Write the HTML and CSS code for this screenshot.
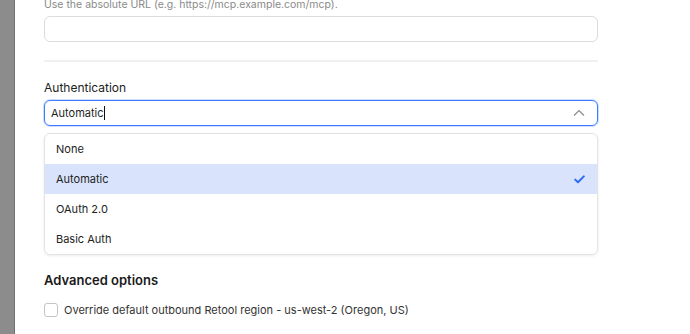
FILE: index.html
```html
<!DOCTYPE html>
<html lang="en">
<head>
  <meta charset="UTF-8" />
  <title>MCP server</title>
  <link rel="stylesheet" href="styles.css">
</head>
<body>
  <div class="backdrop"></div>
  <div class="panel">
    <div class="field">
      <p class="hint">Use the absolute URL (e.g. https://mcp.example.com/mcp).</p>
      <input type="text" class="text-input" />
    </div>

    <hr class="divider" />

    <div class="field auth">
      <label class="label">Authentication</label>
      <div class="select open">
        <span class="select-value">Automatic<span class="caret"></span></span>
        <svg class="chevron" width="12" height="8" viewBox="0 0 12 8">
          <path d="M1 6.5 L6 1.5 L11 6.5" fill="none" stroke="#8a8a8a" stroke-width="1.2" />
        </svg>
      </div>
      <ul class="menu">
        <li>None</li>
        <li class="selected">Automatic
          <svg class="check" width="11" height="9" viewBox="0 0 11 9">
            <path d="M1.2 4.6 L4 7.3 L9.8 1.4" fill="none" stroke="#2d6bf5" stroke-width="2" stroke-linecap="round" stroke-linejoin="round" />
          </svg>
        </li>
        <li>OAuth 2.0</li>
        <li>Basic Auth</li>
      </ul>
    </div>

    <h3 class="section">Advanced options</h3>
    <label class="checkrow">
      <span class="box"></span>
      Override default outbound Retool region - us-west-2 (Oregon, US)
    </label>
  </div>
</body>
</html>
```

FILE: styles.css
```css
body {
  margin: 0;
  font-family: Inter, "Liberation Sans", sans-serif;
  background: #fff;
  display: flex;
  height: 334px;
  overflow: hidden;
}

.backdrop {
  width: 14px;
  background: #8c8c8c;
  border-right: 1px solid #707070;
  flex: none;
}

.panel {
  flex: 1;
  padding: 0 92px 0 29px;
  color: #1f1f1f;
}

.hint {
  margin: -2px 0 4px;
  font-size: 10.5px;
  line-height: 14px;
  color: #8a8a8a;
}

.text-input {
  display: block;
  box-sizing: border-box;
  width: 100%;
  height: 26px;
  margin: 0;
  border: 1px solid #dcdcdc;
  border-radius: 6px;
}

.divider {
  border: none;
  border-top: 2px solid #f0f0f0;
  margin: 18px 0 0;
}

.auth {
  margin-top: 17px;
}

.label {
  display: block;
  font-size: 12px;
  line-height: 18px;
  color: #222;
  margin-bottom: 3px;
}

.select {
  box-sizing: border-box;
  height: 26px;
  border: 1.5px solid #3d7bff;
  border-radius: 6px;
  box-shadow: 0 0 0 1px #cfdcff;
  display: flex;
  align-items: center;
  justify-content: space-between;
  padding: 0 12px 0 6px;
  font-size: 11px;
}

.caret {
  display: inline-block;
  width: 1px;
  height: 14px;
  background: #111;
  vertical-align: -3px;
}

.menu {
  list-style: none;
  margin: 7px 0 0;
  padding: 0;
  border: 1px solid #e3e3e3;
  border-radius: 6px;
  box-shadow: 0 1px 3px rgba(0, 0, 0, 0.08);
  overflow: hidden;
}

.menu li {
  height: 30px;
  display: flex;
  align-items: center;
  justify-content: space-between;
  padding: 0 12px 0 11px;
  font-size: 11px;
  color: #222;
}

.menu li.selected {
  background: #d9e4fc;
}

.section {
  margin: 16px 0 0;
  font-size: 13px;
  font-weight: 600;
  line-height: 18px;
  color: #1a1a1a;
}

.checkrow {
  display: flex;
  align-items: center;
  gap: 6px;
  margin-top: 14px;
  font-size: 11px;
  color: #333;
}

.box {
  box-sizing: border-box;
  width: 14px;
  height: 14px;
  border: 1px solid #c4c4c4;
  border-radius: 3px;
}
```
